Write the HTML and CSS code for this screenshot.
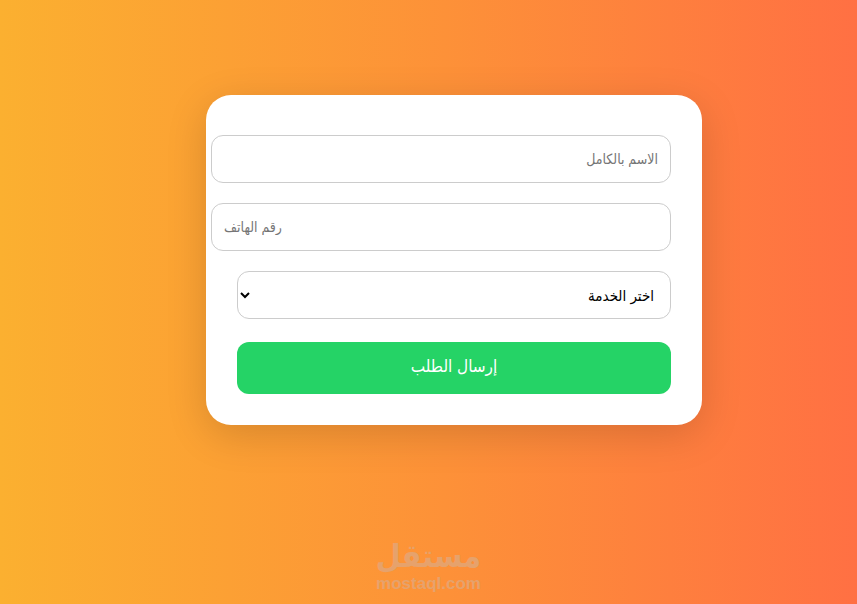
FILE: index.html
```
<!DOCTYPE html>
<html lang="ar" dir="rtl">

<head>
    <meta charset="UTF-8">
    <meta name="viewport" content="width=device-width, initial-scale=1.0">
    <title>طلب خدمة</title>
    <link rel="stylesheet" href="styles.css">
</head>

<body>

    <main class="page">
        <form class="order-form">
            <input type="text" name="name" placeholder="الاسم بالكامل" aria-label="الاسم بالكامل">
            <input type="tel" name="phone" placeholder="رقم الهاتف" aria-label="رقم الهاتف">
            <select name="service" aria-label="اختر الخدمة">
                <option>اختر الخدمة</option>
            </select>
            <button type="submit">إرسال الطلب</button>
        </form>
    </main>

    <footer class="brand">
        <span class="brand-name">مستقل</span>
        <span class="brand-url">mostaql.com</span>
    </footer>

</body>

</html>
```

FILE: styles.css
```
body {
    font-family: "Liberation Sans", "DejaVu Sans Condensed", "DejaVu Sans", sans-serif;
    margin: 0;
    min-height: 100vh;
    display: flex;
    flex-direction: column;
    background: linear-gradient(to right, #fbb030, #fd9138 52%, #ff7043);
}

.page {
    flex: 1;
    display: flex;
    justify-content: center;
    align-items: center;
    padding: 0 0 20px 51px;
}

.order-form {
    width: 100%;
    max-width: 434px;
    background-color: #fff;
    border-radius: 25px;
    box-shadow: 0 10px 40px rgba(0, 0, 0, 0.15);
    padding: 40px 31px 31px;
}

.order-form input,
.order-form select {
    display: block;
    width: 100%;
    height: 22px;
    padding: 12px;
    margin: 0 0 20px;
    font-family: inherit;
    font-size: 14px;
    color: #000;
    background-color: #fff;
    border: 1px solid #ccc;
    border-radius: 12px;
}

.order-form select {
    height: 48px;
    margin-bottom: 23px;
    font-size: 15px;
}

.order-form input[type="tel"] {
    direction: ltr;
}

.order-form button {
    display: block;
    width: 100%;
    height: 52px;
    padding: 0 12px 4px;
    font-family: inherit;
    font-size: 17px;
    color: #fff;
    background-color: #25d366;
    border: none;
    border-radius: 12px;
    cursor: pointer;
}

.brand {
    display: flex;
    flex-direction: column;
    align-items: center;
    padding-bottom: 12px;
    color: #e6a26c;
    font-weight: bold;
}

.brand-name {
    font-family: "DejaVu Sans Condensed", "DejaVu Sans", sans-serif;
    font-size: 32px;
    line-height: 32px;
    padding-bottom: 4px;
}

.brand-url {
    font-size: 17px;
    line-height: 16px;
}
```
